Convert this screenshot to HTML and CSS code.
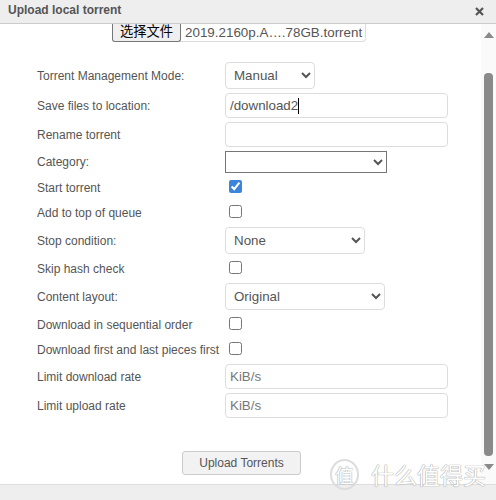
FILE: index.html
```html
<!DOCTYPE html>
<html lang="en">
<head>
<meta charset="utf-8">
<title>Upload local torrent</title>
<link rel="stylesheet" href="styles.css">
</head>
<body>
<div class="dialog">
  <header class="titlebar">
    <span class="title">Upload local torrent</span>
    <svg class="close" width="9" height="9" viewBox="0 0 9 9" aria-hidden="true"><path d="M1 1l7 7M8 1L1 8" stroke="#555" stroke-width="2.2" fill="none"/></svg>
  </header>
  <div class="body">
    <form class="form">
      <div class="file-row">
        <button type="button" class="file-btn">选择文件</button>
        <span class="file-name">2019.2160p.A….78GB.torrent</span>
      </div>
      <div class="rows">
        <div class="row"><label>Torrent Management Mode:</label><select class="sel sel-mode"><option>Manual</option></select></div>
        <div class="row"><label>Save files to location:</label><div class="caret-wrap"><input class="txt" type="text" value="/download2"><i class="caret"></i></div></div>
        <div class="row"><label>Rename torrent</label><input class="txt" type="text"></div>
        <div class="row"><label>Category:</label><select class="sel-cat"><option></option></select></div>
        <div class="row check-row low-label"><label>Start torrent</label><input class="chk" type="checkbox" checked></div>
        <div class="row check-row low-label"><label>Add to top of queue</label><input class="chk" type="checkbox"></div>
        <div class="row"><label>Stop condition:</label><select class="sel sel-stop"><option>None</option></select></div>
        <div class="row check-row low-label"><label>Skip hash check</label><input class="chk" type="checkbox"></div>
        <div class="row"><label>Content layout:</label><select class="sel sel-layout"><option>Original</option></select></div>
        <div class="row check-row low-label"><label>Download in sequential order</label><input class="chk" type="checkbox"></div>
        <div class="row check-row low-label"><label>Download first and last pieces first</label><input class="chk" type="checkbox"></div>
        <div class="row"><label>Limit download rate</label><input class="txt" type="text" placeholder="KiB/s"></div>
        <div class="row"><label>Limit upload rate</label><input class="txt" type="text" placeholder="KiB/s"></div>
      </div>
      <div class="actions"><button type="button" class="submit">Upload Torrents</button></div>
    </form>
    <div class="scrollbar" aria-hidden="true">
      <span class="arrow up"></span>
      <span class="thumb"></span>
      <span class="arrow down"></span>
    </div>
  </div>
  <div class="footer"></div>
</div>
<div class="watermark" aria-hidden="true"><span class="wm-logo">值</span><span class="wm-text">什么值得买</span></div>
</body>
</html>
```
FILE: styles.css
```css
* { box-sizing: border-box; }
html, body { margin: 0; height: 100%; background: #fff; overflow: hidden; }
body { font-family: "Liberation Sans", Arial, "Noto Sans CJK SC", sans-serif; color: #555; font-size: 12px; }
.dialog { width: 496px; height: 500px; display: flex; flex-direction: column; position: relative; }
.titlebar { height: 24px; flex: none; background: #eee; border-bottom: 1px solid #ccc; display: flex; align-items: flex-start; justify-content: space-between; padding: 4px 12px 0 8px; }
.title { font-weight: bold; font-size: 12px; line-height: 12px; color: #555; }
.close { margin-top: 3px; }
.body { flex: 1; display: flex; min-height: 0; }
.form { flex: 1; min-width: 0; display: flex; flex-direction: column; }
.file-row { height: 18px; flex: none; display: flex; align-items: flex-start; margin-left: 112px; width: 254px; border-radius: 0 0 4px 4px; border-right: 1px solid #ddd; border-bottom: 1px solid #ddd; }
.file-btn { height: 18px; width: 69px; flex: none; padding: 0 0 4px; margin: 0; border: 1px solid #767676; border-top: 0; border-radius: 0 0 3px 3px; background: #efefef; font-family: "Noto Sans CJK SC", sans-serif; font-size: 13.3px; line-height: 13px; color: #000; }
.file-name { font-size: 13.4px; line-height: 17px; padding-left: 4px; color: #555; white-space: nowrap; }
.rows { margin-top: 18px; display: flex; flex-direction: column; }
.row { display: grid; grid-template-columns: 188px auto; justify-content: start; align-items: center; padding: 2px 0 2px 37px; }
.row label { font-size: 12px; line-height: 14px; color: #555; }
.low-label label { padding-top: 2px; }
.check-row { height: 25px; padding: 0 0 2px 37px; }
.sel { height: 27px; font: 13.33px "Liberation Sans", Arial, sans-serif; color: #555; background: #fff; border: 1px solid #ddd; border-radius: 4px; padding: 0 4px; }
.sel-mode { width: 90px; }
.sel-stop { width: 140px; }
.sel-layout { width: 160px; }
.sel-cat { width: 162px; height: 22px; color: #555; background: #fff; border: 1px solid #767676; border-radius: 0; font: 13.33px "Liberation Sans", Arial, sans-serif; }
.txt { width: 223px; height: 25px; font: 13.33px "Liberation Sans", Arial, sans-serif; color: #555; border: 1px solid #ddd; border-radius: 4px; padding: 0 4px; background: #fff; }
.txt::placeholder { color: #777; opacity: 1; }
.caret-wrap { position: relative; display: flex; }
.caret { position: absolute; left: 73px; top: 5px; width: 1px; height: 16px; background: #000; }
.chk { width: 13px; height: 13px; margin: 0 0 0 4px; accent-color: #3b86dc; }
.actions { display: flex; justify-content: center; margin-top: 31px; padding-left: 2px; }
.submit { width: 119px; height: 24px; padding: 0; font: 12px "Liberation Sans", Arial, sans-serif; color: #555; background: #f2f2f2; border: 1px solid #ccc; border-radius: 3px; }
.footer { height: 16px; flex: none; background: #eee; border-top: 1px solid #ddd; }
.scrollbar { width: 15px; flex: none; background: #fafafa; display: flex; flex-direction: column; align-items: center; padding: 8px 0 0 0; }
.arrow { width: 0; height: 0; border-left: 5px solid transparent; border-right: 5px solid transparent; flex: none; }
.arrow.up { border-bottom: 6px solid #8a8a8a; }
.arrow.down { border-top: 6px solid #8a8a8a; margin-top: 8px; }
.thumb { width: 9px; height: 383px; background: #8a8a8a; border-radius: 4px; margin-top: 35px; flex: none; }
.watermark { position: absolute; left: 330px; top: 459px; display: flex; align-items: center; gap: 12px; color: #fff; text-shadow: 0 0 1px #999, 0 0 1px #999; font-family: "Noto Sans CJK SC", sans-serif; }
.wm-logo { width: 29px; height: 31px; border-radius: 50%; border: 2px solid #ddd; font-size: 19px; line-height: 27px; text-align: center; }
.wm-text { font-size: 23px; line-height: 31px; white-space: nowrap; }
```
